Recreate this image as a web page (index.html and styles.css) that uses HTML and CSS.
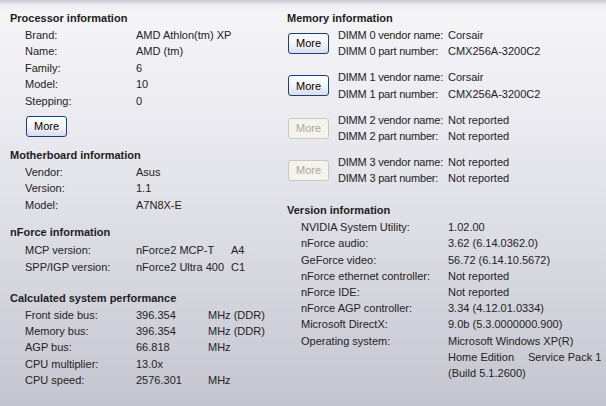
FILE: index.html
```html
<!DOCTYPE html>
<html lang="en">
<head>
    <meta charset="UTF-8">
    <title>NVIDIA System Information</title>
    <link rel="stylesheet" href="styles.css">
</head>
<body>
    <div class="page">
        <div class="column left">
            <h2>Processor information</h2>
            <div class="rows">
                <span>Brand:</span><span>AMD Athlon(tm) XP</span>
                <span>Name:</span><span>AMD (tm)</span>
                <span>Family:</span><span>6</span>
                <span>Model:</span><span>10</span>
                <span>Stepping:</span><span>0</span>
            </div>
            <button class="btn cpu-more">More</button>

            <h2 class="board">Motherboard information</h2>
            <div class="rows">
                <span>Vendor:</span><span>Asus</span>
                <span>Version:</span><span>1.1</span>
                <span>Model:</span><span>A7N8X-E</span>
            </div>

            <h2 class="nforce">nForce information</h2>
            <div class="rows three nf">
                <span>MCP version:</span><span>nForce2 MCP-T</span><span>A4</span>
                <span>SPP/IGP version:</span><span>nForce2 Ultra 400</span><span>C1</span>
            </div>

            <h2 class="perf">Calculated system performance</h2>
            <div class="rows three">
                <span>Front side bus:</span><span>396.354</span><span>MHz (DDR)</span>
                <span>Memory bus:</span><span>396.354</span><span>MHz (DDR)</span>
                <span>AGP bus:</span><span>66.818</span><span>MHz</span>
                <span>CPU multiplier:</span><span>13.0x</span><span></span>
                <span>CPU speed:</span><span>2576.301</span><span>MHz</span>
            </div>
        </div>

        <div class="column right">
            <h2>Memory information</h2>
            <div class="dimm">
                <button class="btn">More</button>
                <div class="dimm-rows">
                    <span class="lbl">DIMM 0 vendor name:</span><span>Corsair</span>
                    <span class="lbl">DIMM 0 part number:</span><span>CMX256A-3200C2</span>
                </div>
            </div>
            <div class="dimm">
                <button class="btn">More</button>
                <div class="dimm-rows">
                    <span class="lbl">DIMM 1 vendor name:</span><span>Corsair</span>
                    <span class="lbl">DIMM 1 part number:</span><span>CMX256A-3200C2</span>
                </div>
            </div>
            <div class="dimm">
                <button class="btn" disabled>More</button>
                <div class="dimm-rows">
                    <span class="lbl">DIMM 2 vendor name:</span><span>Not reported</span>
                    <span class="lbl">DIMM 2 part number:</span><span>Not reported</span>
                </div>
            </div>
            <div class="dimm">
                <button class="btn" disabled>More</button>
                <div class="dimm-rows">
                    <span class="lbl">DIMM 3 vendor name:</span><span>Not reported</span>
                    <span class="lbl">DIMM 3 part number:</span><span>Not reported</span>
                </div>
            </div>

            <h2 class="version">Version information</h2>
            <div class="rows ver">
                <span>NVIDIA System Utility:</span><span>1.02.00</span>
                <span>nForce audio:</span><span>3.62 (6.14.0362.0)</span>
                <span>GeForce video:</span><span>56.72 (6.14.10.5672)</span>
                <span>nForce ethernet controller:</span><span>Not reported</span>
                <span>nForce IDE:</span><span>Not reported</span>
                <span>nForce AGP controller:</span><span>3.34 (4.12.01.0334)</span>
                <span>Microsoft DirectX:</span><span>9.0b (5.3.0000000.900)</span>
                <span>Operating system:</span>
                <span class="os">Microsoft Windows XP(R)<br><span class="edition">Home Edition</span>Service Pack 1<br>(Build 5.1.2600)</span>
            </div>
        </div>
    </div>
</body>
</html>
```

FILE: styles.css
```css
html, body {
    margin: 0;
    height: 100%;
}

body {
    font-family: "Liberation Sans", Arial, sans-serif;
    font-size: 11px;
    line-height: 16.4px;
    color: #222;
    background: linear-gradient(to bottom, #c8c8d4 0px, #eeeef3 5px, #f5f5f8 14px, #e4e4eb 180px, #c5c5d1 406px);
    overflow: hidden;
}

.page {
    display: flex;
    height: 406px;
}

.column {
    padding-top: 10px;
}

.left {
    width: 277px;
    padding-left: 10px;
}

.right {
    flex: 1;
}

h2 {
    margin: 0;
    font-size: 11px;
    font-weight: bold;
    line-height: 17px;
    color: #1c1c1c;
}

.rows {
    display: grid;
    grid-template-columns: 111px auto;
    padding-left: 15px;
}

.rows.three {
    grid-template-columns: 111px 72px auto;
}

.rows.three.nf {
    grid-template-columns: 111px 95px auto;
    margin-top: 1px;
}

.rows.ver {
    grid-template-columns: 147px auto;
    padding-left: 14px;
    line-height: 16.2px;
}

.os .edition {
    display: inline-block;
    width: 80px;
}

.board {
    margin-top: 10.5px;
}

.nforce {
    margin-top: 11px;
}

.perf {
    margin-top: 14.5px;
}

.version {
    margin-top: 15.5px;
}

.btn {
    display: block;
    width: 41px;
    height: 21px;
    padding: 0;
    font-family: "Liberation Sans", Arial, sans-serif;
    font-size: 11px;
    color: #000;
    border: 1px solid #1c3f7a;
    border-radius: 3px;
    background: linear-gradient(to bottom, #ffffff 0%, #f4f4f8 50%, #dcdcec 100%);
}

.btn:disabled {
    color: #aca899;
    border-color: #cac8bb;
    background: #f4f3ee;
}

.cpu-more {
    margin-top: 6.5px;
    margin-left: 16px;
}

.dimm {
    display: flex;
    align-items: center;
    gap: 9px;
    margin-bottom: 9.5px;
}

.dimm .btn {
    margin-left: 1px;
}

.dimm-rows {
    display: grid;
    grid-template-columns: 110px auto;
}

.dimm-rows .lbl {
    letter-spacing: -0.2px;
}
```
